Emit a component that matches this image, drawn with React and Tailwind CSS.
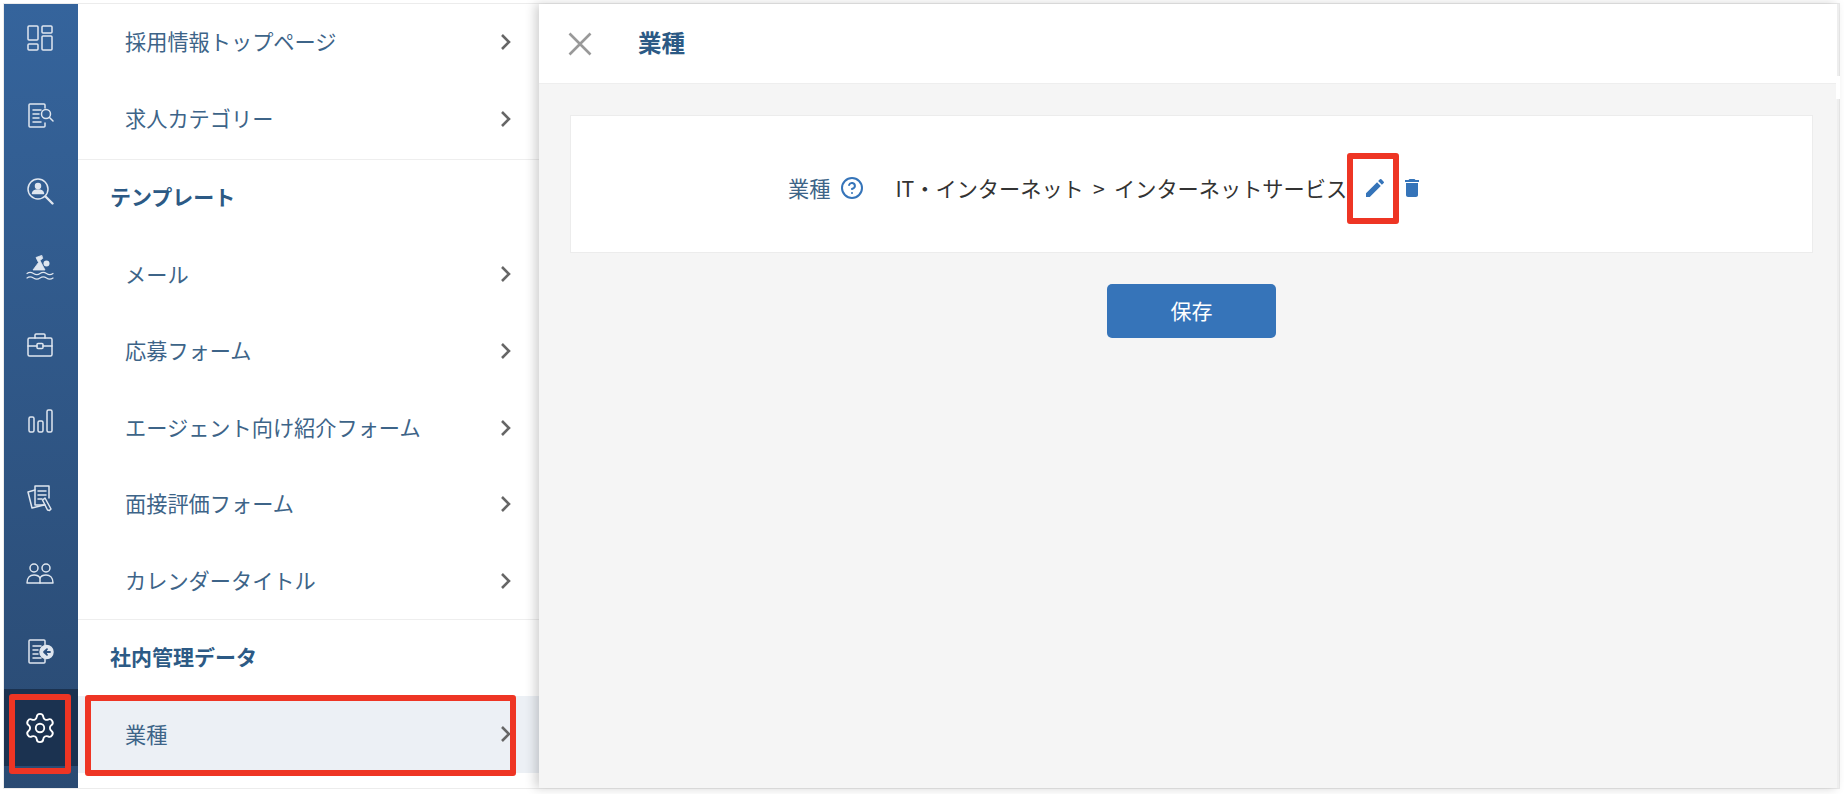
import { Settings, CircleHelp } from 'lucide-react'
import { MdEdit, MdDelete } from 'react-icons/md'

const iconProps = {
  width: 28,
  height: 28,
  viewBox: '0 0 28 28',
  fill: 'none',
  stroke: 'currentColor',
  strokeWidth: 1.5,
  strokeLinecap: 'round',
  strokeLinejoin: 'round',
}

const DashboardIcon = () => (
  <svg {...iconProps}>
    <rect x="2" y="2" width="10" height="14" rx="1" />
    <rect x="16" y="2" width="10" height="7" rx="1" />
    <rect x="2" y="20" width="10" height="6" rx="1" />
    <rect x="16" y="12" width="10" height="14" rx="1" />
  </svg>
)

const DocSearchIcon = () => (
  <svg {...iconProps}>
    <path d="M19 7V4a1 1 0 0 0-1-1H4a1 1 0 0 0-1 1v21a1 1 0 0 0 1 1h14a1 1 0 0 0 1-1v-3" />
    <path d="M7 9h8M7 13h6M7 17h6M7 21h8" />
    <circle cx="20" cy="13" r="4.5" />
    <path d="m23.5 16.5 3.5 3.500" />
  </svg>
)

const UserSearchIcon = () => (
  <svg {...iconProps}>
    <circle cx="12" cy="12" r="10" />
    <circle cx="12" cy="9" r="2.5" fill="currentColor" />
    <path d="M6.5 16.5c.5-2.500 3-3.500 5.500-3.500s5 1 5.500 3.500z" fill="currentColor" />
    <path d="m19.500 19.500 7 7" strokeWidth="2.400" />
  </svg>
)

const SwimmerIcon = () => (
  <svg {...iconProps}>
    <circle cx="20.500" cy="9.500" r="3" fill="currentColor" stroke="none" />
    <path d="M15.500 1.500 10 3.500l2.500 5L7 16h12L14 6.500l2.500-2z" fill="currentColor" strokeWidth="0.800" />
    <path d="M1 19.500c2.200-1.600 4-1.600 6.500 0s4.300 1.600 6.500 0 4.300-1.600 6.500 0 4.300 1.600 6.500 0" strokeWidth="1.200" />
    <path d="M1 24c2.200-1.600 4-1.600 6.500 0s4.300 1.600 6.500 0 4.300-1.600 6.500 0 4.300 1.600 6.500 0" strokeWidth="1.200" />
  </svg>
)

const BriefcaseIcon = () => (
  <svg {...iconProps}>
    <rect x="2" y="7" width="24" height="18" rx="1.500" />
    <path d="M9 7V4a1 1 0 0 1 1-1h8a1 1 0 0 1 1 1v3" />
    <path d="M2 15h9M17 15h9" />
    <rect x="11" y="12.500" width="6" height="5" rx="1" />
  </svg>
)

const BarsIcon = () => (
  <svg {...iconProps}>
    <rect x="3" y="10" width="5" height="15" rx="1.500" />
    <rect x="12" y="14" width="5" height="11" rx="1.500" />
    <rect x="21" y="3" width="5" height="22" rx="1.500" />
  </svg>
)

const DocsPencilIcon = () => (
  <svg {...iconProps}>
    <path d="M9 6 2 8l4 16 12-3" />
    <path d="M9 2h14v12M9 2v19h10" />
    <path d="M12 7h8M12 11h8M12 15h4" />
    <path d="m19 14 6 11-1.500 1.500-2-.5-5-10z" />
  </svg>
)

const PeopleIcon = () => (
  <svg {...iconProps}>
    <circle cx="8" cy="8" r="4" />
    <circle cx="20" cy="8" r="4" />
    <path d="M1 23c0-5 3-8 7-8 3 0 5 1 6 3 1-2 3-3 6-3 4 0 7 3 7 8z" />
    <path d="M14 18v5" />
  </svg>
)

const DocArrowIcon = () => (
  <svg {...iconProps}>
    <path d="M19 8V4a1 1 0 0 0-1-1H4a1 1 0 0 0-1 1v21a1 1 0 0 0 1 1h14a1 1 0 0 0 1-1v-3" />
    <path d="M7 9h8M7 13h5M7 17h5M7 21h8" />
    <circle cx="20.500" cy="15" r="6.500" fill="currentColor" />
    <path d="M24 15h-5M21 12.200 18 15l3 2.800" stroke="#2d5180" fill="#2d5180" strokeWidth="1.800" />
  </svg>
)

const navIcons = [
  <DashboardIcon />,
  <DocSearchIcon />,
  <UserSearchIcon />,
  <SwimmerIcon />,
  <BriefcaseIcon />,
  <BarsIcon />,
  <DocsPencilIcon />,
  <PeopleIcon />,
  <DocArrowIcon />,
]

const Chevron = () => (
  <svg width="12" height="18" viewBox="0 0 12 18" fill="none" stroke="#666666" strokeWidth="2.600" className="shrink-0">
    <path d="m2 2 7 7-7 7" />
  </svg>
)

function MenuRow({ label }) {
  return (
    <div className="flex h-[76.600px] shrink-0 items-center justify-between pl-[47px] pr-[27px]">
      <span className="-mt-[2px] text-[21.200px] text-[#3d6488]">{label}</span>
      <Chevron />
    </div>
  )
}

function SectionTitle({ label }) {
  return (
    <div className="flex h-[76px] shrink-0 items-center pb-[2px] pl-[32px] text-[21px] font-bold text-[#2c5a85]">
      {label}
    </div>
  )
}

export default function App() {
  return (
    <div className="h-[794px] w-full overflow-hidden bg-white pb-[5px] pl-[3px] pr-[4px] pt-[3px] [font-family:'Noto_Sans_CJK_JP','Liberation_Sans',sans-serif]">
      <div className="flex h-full border border-[#ececec]">
        {/* Icon rail */}
        <div className="flex w-[74px] shrink-0 flex-col overflow-hidden bg-gradient-to-b from-[#35649c] to-[#2a4a72] text-[#dfe6ef]">
          <div className="-mt-[4px]">
            {navIcons.map((icon, i) => (
              <div key={i} className="flex h-[76.600px] items-center justify-center pr-[2px]">
                {icon}
              </div>
            ))}
            <div className="relative flex h-[77px] items-center justify-center bg-[#1b3250] pr-[2px] text-white">
              <Settings size={34} strokeWidth={1.300} />
              <div className="absolute -bottom-[8px] left-[5px] top-[5px] w-[62px] rounded-[3px] border-[6px] border-[#ee3524]" />
            </div>
          </div>
        </div>

        {/* Settings menu */}
        <div className="flex w-[461px] shrink-0 flex-col bg-white">
          <MenuRow label="採用情報トップページ" />
          <MenuRow label="求人カテゴリー" />
          <div className="mt-[2px] border-t border-[#eeeeee]" />
          <SectionTitle label="テンプレート" />
          <MenuRow label="メール" />
          <MenuRow label="応募フォーム" />
          <MenuRow label="エージェント向け紹介フォーム" />
          <MenuRow label="面接評価フォーム" />
          <MenuRow label="カレンダータイトル" />
          <div className="border-t border-[#eeeeee]" />
          <SectionTitle label="社内管理データ" />
          <div className="relative bg-[#ecf0f5]">
            <MenuRow label="業種" />
            <div className="absolute -bottom-[3px] -top-[1px] left-[7px] w-[431px] rounded-[3px] border-[6px] border-[#ee3524]" />
          </div>
        </div>

        {/* Detail panel */}
        <div className="relative z-10 flex min-w-0 flex-1 flex-col border-r-2 border-[#eeeeee] bg-[#f5f5f5] shadow-[-4px_0_10px_rgba(0,0,0,0.18)]">
          <div className="flex h-[80px] shrink-0 items-center border-b border-[#eeeeee] bg-white pl-[29px]">
            <svg width="24" height="24" viewBox="0 0 24 24" fill="none" stroke="#999999" strokeWidth="2.600">
              <path d="m1.500 1.500 21 21M22.500 1.500l-21 21" />
            </svg>
            <span className="-mt-[2px] ml-[46px] text-[23.500px] font-bold text-[#2c5a85]">業種</span>
          </div>
          {/* gap in the window edge */}
          <div className="absolute -right-[3px] top-[72px] h-[23px] w-[4px] bg-white" />

          <div className="flex flex-col items-center pl-[31px] pr-[24px] pt-[31px]">
            <div className="flex h-[138px] w-full items-start border border-[#ececec] bg-white pl-[217px] pt-[56px]">
              <span className="text-[21.200px] leading-[32px] text-[#3d6488]">業種</span>
              <CircleHelp size={24} strokeWidth={2} className="ml-[10px] mt-[4px] text-[#3574b9]" />
              <span className="ml-[31px] text-[21.200px] leading-[32px] text-[#333333] [word-spacing:4.500px]">
                IT・インターネット &gt; インターネットサービス
              </span>
              <div className="relative ml-[16px] mt-[4px]">
                <MdEdit size={24} className="text-[#3574b9]" />
                <div className="absolute -left-[16px] -top-[23px] h-[71px] w-[52px] rounded-[3px] border-[6px] border-[#ee3524]" />
              </div>
              <MdDelete size={24} className="ml-[13px] mt-[4px] text-[#3574b9]" />
            </div>
            <button className="mt-[31px] h-[54px] w-[169px] rounded-[5px] bg-[#3674b9] text-[21px] text-white">
              保存
            </button>
          </div>
        </div>
      </div>
    </div>
  )
}
